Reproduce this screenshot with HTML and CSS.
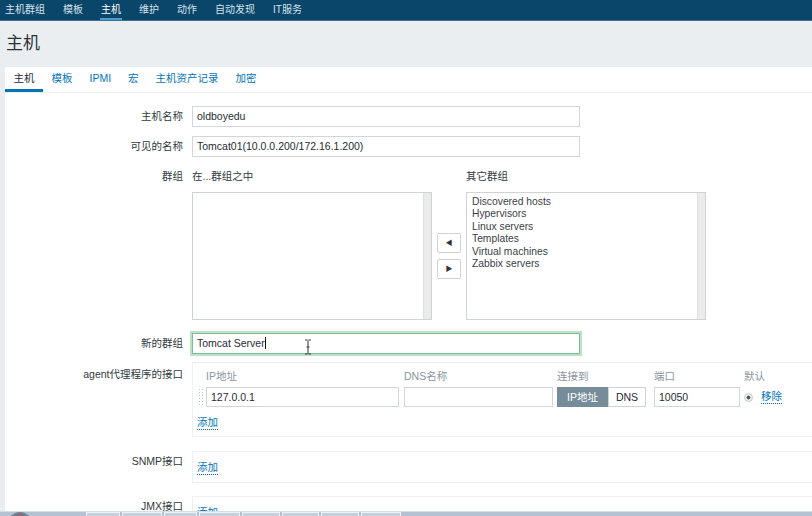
FILE: index.html
```html
<!DOCTYPE html>
<html lang="zh">
<head>
<meta charset="utf-8">
<title>主机</title>
<link rel="stylesheet" href="styles.css">
</head>
<body>
<nav class="topnav">
  <a class="nav-item">主机群组</a>
  <a class="nav-item">模板</a>
  <a class="nav-item active">主机</a>
  <a class="nav-item">维护</a>
  <a class="nav-item">动作</a>
  <a class="nav-item">自动发现</a>
  <a class="nav-item">IT服务</a>
</nav>
<header class="header"><h1 class="title">主机</h1></header>
<main class="panel">
  <div class="tabs">
    <span class="tab active">主机</span>
    <span class="tab">模板</span>
    <span class="tab">IPMI</span>
    <span class="tab">宏</span>
    <span class="tab">主机资产记录</span>
    <span class="tab">加密</span>
  </div>
  <div class="form">
    <div class="row">
      <div class="label">主机名称</div>
      <div class="field"><div class="input wide">oldboyedu</div></div>
    </div>
    <div class="row">
      <div class="label">可见的名称</div>
      <div class="field"><div class="input wide">Tomcat01(10.0.0.200/172.16.1.200)</div></div>
    </div>
    <div class="row row-groups">
      <div class="label">群组</div>
      <div class="field groups">
        <div class="group-col">
          <div class="group-head">在...群组之中</div>
          <div class="listbox"><div class="list-items"></div><div class="list-track"></div></div>
        </div>
        <div class="group-btns">
          <span class="arrow-btn">&#9664;</span>
          <span class="arrow-btn">&#9654;</span>
        </div>
        <div class="group-col">
          <div class="group-head">其它群组</div>
          <div class="listbox">
            <div class="list-items">
              <div>Discovered hosts</div>
              <div>Hypervisors</div>
              <div>Linux servers</div>
              <div>Templates</div>
              <div>Virtual machines</div>
              <div>Zabbix servers</div>
            </div>
            <div class="list-track"></div>
          </div>
        </div>
      </div>
    </div>
    <div class="row row-newgroup">
      <div class="label">新的群组</div>
      <div class="field">
        <div class="input wide focused">Tomcat Server<span class="caret"></span>
          <svg class="ibeam" width="8" height="16" viewBox="0 0 8 16"><path d="M1 1h2.5M4.5 1H7M4 1.5v13M1 15h2.5M4.5 15H7M2.5 8h3" stroke="#333" stroke-width="1" fill="none"/></svg>
        </div>
      </div>
    </div>
    <div class="row row-agent">
      <div class="label">agent代理程序的接口</div>
      <div class="field">
        <div class="ifbox agent">
          <div class="iftable">
            <span></span>
            <span class="ifhead">IP地址</span>
            <span class="ifhead">DNS名称</span>
            <span class="ifhead">连接到</span>
            <span class="ifhead">端口</span>
            <span class="ifhead">默认</span>
            <span class="handle"></span>
            <span class="input ip">127.0.0.1</span>
            <span class="input dns"></span>
            <span class="seg"><span class="seg-btn on">IP地址</span><span class="seg-btn">DNS</span></span>
            <span class="input port">10050</span>
            <span class="default"><span class="radio"></span><a class="link">移除</a></span>
          </div>
          <a class="link add">添加</a>
        </div>
      </div>
    </div>
    <div class="row row-snmp">
      <div class="label">SNMP接口</div>
      <div class="field"><div class="ifbox simple"><a class="link add">添加</a></div></div>
    </div>
    <div class="row row-jmx">
      <div class="label">JMX接口</div>
      <div class="field"><div class="ifbox simple"><a class="link add">添加</a></div></div>
    </div>
  </div>
</main>
<div class="taskbar">
  <span class="orb"></span>
  <span class="tb-item w1"></span>
  <span class="tb-item w2"></span>
  <span class="tb-item w3"></span>
  <span class="tb-item w4"></span>
  <span class="tb-item w5"></span>
  <span class="tb-item w6"></span>
  <span class="tb-item w7"></span>
  <span class="tb-item w8"></span>
</div>
</body>
</html>
```

FILE: styles.css
```css
* { box-sizing: border-box; }
html, body { margin: 0; padding: 0; }
body {
  width: 812px;
  height: 516px;
  overflow: hidden;
  background: #ebeef0;
  font-family: "Liberation Sans", "Noto Sans CJK SC", sans-serif;
  font-size: 10.5px;
  color: #1f2c33;
  position: relative;
}

/* top navigation */
.topnav {
  height: 21px;
  background: #0a466a;
  display: flex;
  gap: 18px;
  padding-left: 5px;
  border-bottom: 1px solid #3d6f8e;
}
.nav-item {
  font-size: 10px;
  line-height: 20px;
  color: #d6e2ea;
  position: relative;
}
.nav-item.active { color: #fff; }
.nav-item.active::after {
  content: "";
  position: absolute;
  left: -1px; right: -1px; bottom: 0;
  height: 2px;
  background: #4f9bd0;
}

/* page header */
.header {
  height: 46px;
  background: #ebeef0;
  display: flex;
  align-items: center;
  padding-left: 6px;
}
.title {
  margin: 0;
  font-size: 17px;
  font-weight: normal;
  color: #2b3338;
  padding-bottom: 5px;
}

/* white panel */
.panel {
  margin-left: 5px;
  width: 807px;
  height: 460px;
  background: #fff;
  overflow: hidden;
}
.tabs {
  display: flex;
  height: 26px;
  border-bottom: 1px solid #ebeef0;
}
.tab {
  padding: 0 8.5px;
  line-height: 23px;
  color: #0275b8;
  font-size: 10.5px;
  border-bottom: 3px solid transparent;
}
.tab.active {
  color: #1f2c33;
  border-bottom-color: #0275b8;
}

/* form */
.form { padding-top: 13px; }
.row {
  display: grid;
  grid-template-columns: 178px 1fr;
  column-gap: 9px;
  margin-bottom: 9px;
}
.field { min-width: 0; }
.label {
  text-align: right;
  line-height: 21px;
  color: #2f3a40;
  white-space: nowrap;
}
.input {
  display: block;
  height: 21px;
  border: 1px solid #d3d6d9;
  background: #fff;
  padding: 0 4px;
  line-height: 19px;
  color: #1f2c33;
  white-space: nowrap;
}
.input.wide { width: 388px; }
.input.focused {
  position: relative;
  border-color: #7fb8a6;
  box-shadow: 0 0 0 2px #bfe3c2;
}
.caret {
  display: inline-block;
  width: 1px;
  height: 12px;
  background: #111;
  vertical-align: -2px;
}
.ibeam {
  position: absolute;
  left: 111px;
  top: 5px;
}

/* groups */
.groups { display: flex; }
.group-col { display: flex; flex-direction: column; }
.group-head {
  line-height: 20px;
  margin-bottom: 6px;
  color: #2f3a40;
}
.listbox {
  width: 240px;
  height: 128px;
  border: 1px solid #d0d3d6;
  display: flex;
}
.list-items {
  flex: 1;
  padding: 3px 0 0 5px;
  font-size: 10.3px;
  line-height: 12.4px;
  color: #3a4246;
}
.list-track {
  width: 8px;
  background: #ebebeb;
  border-left: 1px solid #e0e0e0;
}
.group-btns {
  width: 34px;
  align-self: flex-end;
  height: 128px;
  display: flex;
  flex-direction: column;
  justify-content: center;
  align-items: center;
  gap: 6px;
}
.arrow-btn {
  width: 24px;
  height: 20px;
  border: 1px solid #cfd3d6;
  border-radius: 2px;
  background: #fff;
  font-size: 7px;
  line-height: 18px;
  text-align: center;
  color: #333;
}

.row.row-groups { margin-bottom: 13px; }
.row.row-newgroup { margin-bottom: 8px; }

/* interface boxes */
.ifbox {
  width: 640px;
  border: 1px solid #eef0f1;
  border-right: none;
}
.ifbox.agent { padding: 4px 0 6px 4px; }
.iftable {
  display: grid;
  grid-template-columns: 9px 198px 153px 97px 90px auto;
  grid-template-rows: 18px 20px;
  row-gap: 2px;
}
.ifhead {
  line-height: 18px;
  color: #8a969c;
}
.handle {
  width: 5px;
  margin-left: 1px;
  height: 18px;
  margin-top: 1px;
  background-image: radial-gradient(circle, #b9c0c4 0.8px, transparent 1px);
  background-size: 3px 3px;
}
.input.ip { width: 193px; height: 20px; line-height: 18px; }
.input.dns { width: 149px; height: 20px; }
.input.port { width: 86px; height: 20px; line-height: 18px; }
.seg {
  display: flex;
  width: 89px;
  height: 20px;
}
.seg-btn {
  flex: 1;
  text-align: center;
  line-height: 18px;
  border: 1px solid #cfd3d6;
  color: #1f2c33;
  background: #fff;
}
.seg-btn.on {
  flex: 0 0 51px;
  background: #768d99;
  border-color: #768d99;
  color: #fff;
}
.default {
  display: flex;
  align-items: center;
  gap: 8px;
}
.radio {
  width: 9px;
  height: 9px;
  border-radius: 50%;
  border: 1px solid #c4c9cc;
  background: radial-gradient(circle, #4f5a60 1.8px, #eef0f1 2.2px);
}
.link {
  color: #0275b8;
  border-bottom: 1px dotted #0275b8;
  line-height: 13px;
}
.link.add {
  display: inline-block;
  margin-top: 9px;
  margin-left: 0;
}
.ifbox.simple {
  height: 32px;
  padding: 8px 0 0 4px;
}
.ifbox.simple .link.add { margin-top: 1px; }
.row.row-agent { margin-bottom: 14px; }
.row.row-snmp { margin-bottom: 13px; }
.row-snmp .label, .row-jmx .label { line-height: 20px; }
.row-agent .label { line-height: 20px; padding-top: 2px; }

/* taskbar strip at bottom of screen */
.taskbar {
  position: fixed;
  left: 0;
  right: 0;
  bottom: 0;
  height: 5px;
  background: #b4c2d3;
  border-top: 1px solid #d6dde5;
  display: flex;
  gap: 2px;
  padding-left: 86px;
  overflow: hidden;
}
.orb {
  position: absolute;
  left: 7px;
  top: 0;
  width: 26px;
  height: 26px;
  border-radius: 50%;
  background: radial-gradient(circle at 50% 30%, #b5594c 0 4px, #6b7a8a 6px, #9aabbd 13px);
}
.tb-item {
  height: 4px;
  border: 1px solid #eef2f6;
  border-bottom: none;
  background: #c5d0dd;
}
.w1 { width: 34px; }
.w2 { width: 40px; }
.w3 { width: 33px; }
.w4 { width: 41px; }
.w5 { width: 38px; }
.w6 { width: 37px; }
.w7 { width: 38px; }
.w8 { width: 40px; }
```
